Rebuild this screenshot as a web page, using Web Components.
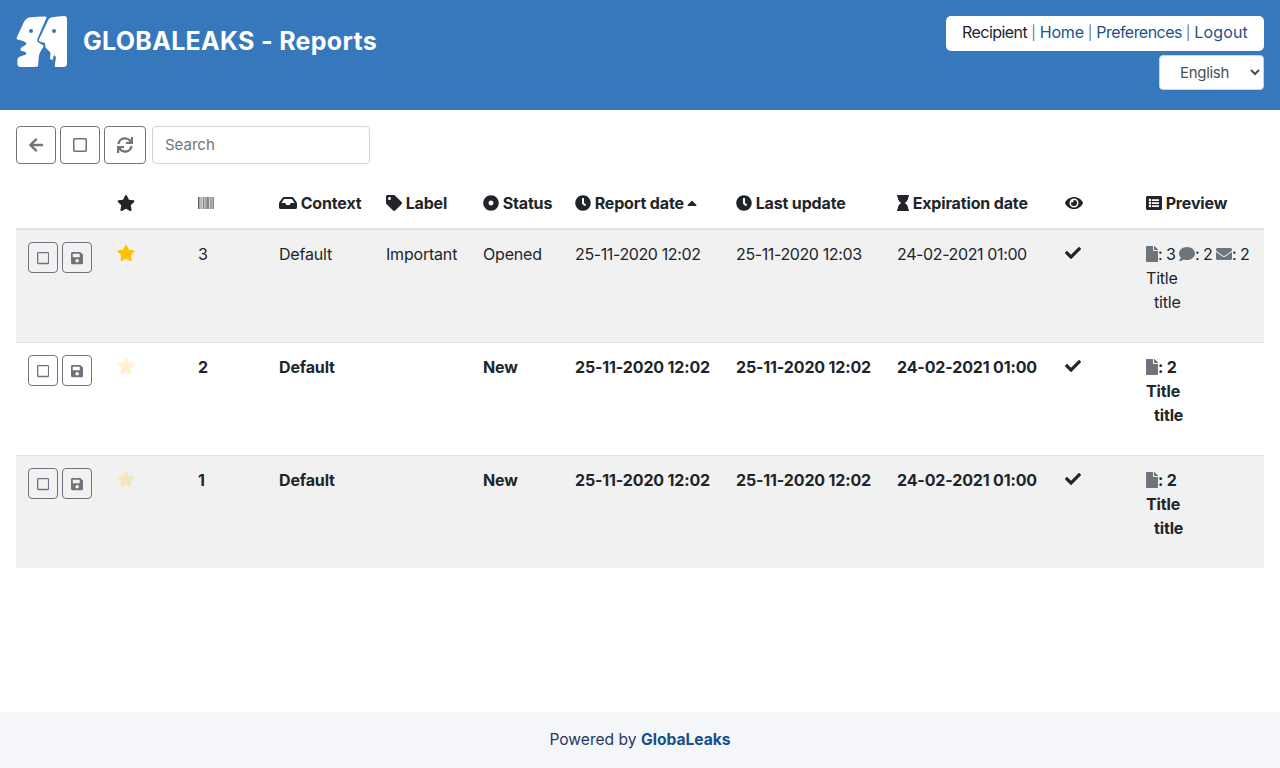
<!DOCTYPE html>
<html lang="en"><head><meta charset="utf-8"><title>GlobaLeaks - Reports</title>
<style>
html,body{margin:0;padding:0;background:#fff}
body{font:400 16px/24px Inter,"Liberation Sans",sans-serif;color:#212529}
</style></head><body>
<gl-app>
  <gl-header slot="header" title-text="GLOBALEAKS - Reports"></gl-header>
  <gl-toolbar>
    <gl-button size="lg" w="40"><gl-icon name="arrow"></gl-icon></gl-button>
    <gl-button size="lg" w="40"><gl-icon name="square"></gl-icon></gl-button>
    <gl-button size="lg" w="42"><gl-icon name="sync"></gl-icon></gl-button>
    <gl-search></gl-search>
  </gl-toolbar>
  <gl-table>
    <gl-row head>
      <gl-cell></gl-cell>
      <gl-cell><gl-icon name="star"></gl-icon></gl-cell>
      <gl-cell><gl-icon name="barcode"></gl-icon></gl-cell>
      <gl-cell><gl-icon name="inbox"></gl-icon> Context</gl-cell>
      <gl-cell><gl-icon name="tag"></gl-icon> Label</gl-cell>
      <gl-cell><gl-icon name="dot"></gl-icon> Status</gl-cell>
      <gl-cell><gl-icon name="clock"></gl-icon> Report date <gl-icon name="sort"></gl-icon></gl-cell>
      <gl-cell><gl-icon name="clock"></gl-icon> Last update</gl-cell>
      <gl-cell><gl-icon name="hourglass"></gl-icon> Expiration date</gl-cell>
      <gl-cell><gl-icon name="eye"></gl-icon></gl-cell>
      <gl-cell><gl-icon name="list"></gl-icon> Preview</gl-cell>
    </gl-row>
    <gl-row striped first>
      <gl-cell><gl-actions></gl-actions></gl-cell>
      <gl-cell up><gl-icon name="star" style="color:#ffc107"></gl-icon></gl-cell>
      <gl-cell>3</gl-cell><gl-cell>Default</gl-cell><gl-cell>Important</gl-cell><gl-cell>Opened</gl-cell>
      <gl-cell date>25-11-2020 12:02</gl-cell><gl-cell date>25-11-2020 12:03</gl-cell><gl-cell date>24-02-2021 01:00</gl-cell>
      <gl-cell up><gl-icon name="check"></gl-icon></gl-cell>
      <gl-cell tight><gl-icon name="file" style="color:#6c757d"></gl-icon>: 3 <gl-icon name="comment" style="color:#6c757d"></gl-icon>: 2 <gl-icon name="envelope" style="color:#6c757d"></gl-icon>: 2<br>Title<br><span style="padding-left:8px">title</span></gl-cell>
    </gl-row>
    <gl-row unread>
      <gl-cell><gl-actions></gl-actions></gl-cell>
      <gl-cell up><gl-icon name="star" style="color:#ffc107;opacity:.2"></gl-icon></gl-cell>
      <gl-cell>2</gl-cell><gl-cell>Default</gl-cell><gl-cell></gl-cell><gl-cell>New</gl-cell>
      <gl-cell>25-11-2020 12:02</gl-cell><gl-cell>25-11-2020 12:02</gl-cell><gl-cell>24-02-2021 01:00</gl-cell>
      <gl-cell up><gl-icon name="check"></gl-icon></gl-cell>
      <gl-cell><gl-icon name="file" style="color:#6c757d"></gl-icon>: 2<br>Title<br><span style="padding-left:8px">title</span></gl-cell>
    </gl-row>
    <gl-row striped unread>
      <gl-cell><gl-actions></gl-actions></gl-cell>
      <gl-cell up><gl-icon name="star" style="color:#ffc107;opacity:.2"></gl-icon></gl-cell>
      <gl-cell>1</gl-cell><gl-cell>Default</gl-cell><gl-cell></gl-cell><gl-cell>New</gl-cell>
      <gl-cell>25-11-2020 12:02</gl-cell><gl-cell>25-11-2020 12:02</gl-cell><gl-cell>24-02-2021 01:00</gl-cell>
      <gl-cell up><gl-icon name="check"></gl-icon></gl-cell>
      <gl-cell><gl-icon name="file" style="color:#6c757d"></gl-icon>: 2<br>Title<br><span style="padding-left:8px">title</span></gl-cell>
    </gl-row>
  </gl-table>
  <gl-footer></gl-footer>
</gl-app>
<script>
const ICONS={
star:[576,'M259.3 17.8L194 150.2 47.9 171.5c-26.2 3.8-36.7 36.1-17.7 54.6l105.7 103-25 145.5c-4.5 26.3 23.2 46 46.4 33.7L288 439.6l130.7 68.7c23.2 12.2 50.9-7.4 46.4-33.7l-25-145.5 105.7-103c19-18.5 8.5-50.8-17.7-54.6L382 150.2 316.7 17.8c-11.7-23.6-45.6-23.9-57.4 0z'],
arrow:[448,'M257.5 445.1l-22.2 22.2c-9.4 9.4-24.6 9.4-33.9 0L7 273c-9.4-9.4-9.4-24.6 0-33.9L201.4 44.7c9.4-9.4 24.6-9.4 33.9 0l22.2 22.2c9.5 9.5 9.3 25-.4 34.3L136.6 216H424c13.3 0 24 10.7 24 24v32c0 13.3-10.7 24-24 24H136.6l120.5 114.8c9.8 9.3 10 24.8.4 34.3z'],
square:[448,'M400 32H48C21.5 32 0 53.5 0 80v352c0 26.5 21.5 48 48 48h352c26.5 0 48-21.5 48-48V80c0-26.5-21.5-48-48-48zm-6 400H54c-3.3 0-6-2.7-6-6V86c0-3.3 2.7-6 6-6h340c3.3 0 6 2.7 6 6v340c0 3.3-2.7 6-6 6z'],
sync:[512,'M440.65 12.57l4 82.77A247.16 247.16 0 0 0 255.83 8C134.73 8 33.91 94.92 12.29 209.82A12 12 0 0 0 24.09 224h49.05a12 12 0 0 0 11.67-9.26 175.91 175.91 0 0 1 317-56.94l-101.46-4.86a12 12 0 0 0-12.57 12v47.41a12 12 0 0 0 12 12H500a12 12 0 0 0 12-12V12a12 12 0 0 0-12-12h-47.37a12 12 0 0 0-11.98 12.57zM255.83 432a175.61 175.61 0 0 1-146-77.8l101.8 4.87a12 12 0 0 0 12.57-12v-47.4a12 12 0 0 0-12-12H12a12 12 0 0 0-12 12V500a12 12 0 0 0 12 12h47.35a12 12 0 0 0 12-12.6l-4.15-82.57A247.17 247.17 0 0 0 255.83 504c121.11 0 221.93-86.92 243.55-201.82a12 12 0 0 0-11.8-14.18h-49.05a12 12 0 0 0-11.67 9.26A175.86 175.86 0 0 1 255.83 432z'],
save:[448,'M433.941 129.941l-83.882-83.882A48 48 0 0 0 316.118 32H48C21.49 32 0 53.49 0 80v352c0 26.51 21.49 48 48 48h352c26.51 0 48-21.49 48-48V163.882a48 48 0 0 0-14.059-33.941zM224 416c-35.346 0-64-28.654-64-64 0-35.346 28.654-64 64-64s64 28.654 64 64c0 35.346-28.654 64-64 64zm96-304.52V212c0 6.627-5.373 12-12 12H76c-6.627 0-12-5.373-12-12V108c0-6.627 5.373-12 12-12h228.52c3.183 0 6.235 1.264 8.485 3.515l3.48 3.48A11.996 11.996 0 0 1 320 111.48z'],
barcode:[512,'M0 64h18v384H0zM27 64h9v384h-9zM54 64h9v384h-9zM81 64h9v384h-9zM117 64h18v384h-18zM162 64h18v384h-18zM198 64h9v384h-9zM225 64h9v384h-9zM252 64h18v384h-18zM297 64h18v384h-18zM333 64h18v384h-18zM378 64h9v384h-9zM405 64h18v384h-18zM441 64h9v384h-9zM468 64h9v384h-9zM494 64h18v384h-18z'],
inbox:[576,'M567.938 243.908L462.25 85.374A48.003 48.003 0 0 0 422.311 64H153.689a48 48 0 0 0-39.938 21.374L8.062 243.908A47.994 47.994 0 0 0 0 270.533V400c0 26.51 21.49 48 48 48h480c26.51 0 48-21.49 48-48V270.533a47.994 47.994 0 0 0-8.062-26.625zM162.252 128h251.497l85.333 128H376l-32 64H232l-32-64H76.918l85.334-128z'],
tag:[512,'M0 252.118V48C0 21.49 21.49 0 48 0h204.118a48 48 0 0 1 33.941 14.059l211.882 211.882c18.745 18.745 18.745 49.137 0 67.882L293.823 497.941c-18.745 18.745-49.137 18.745-67.882 0L14.059 286.059A48 48 0 0 1 0 252.118zM112 64c-26.51 0-48 21.49-48 48s21.49 48 48 48 48-21.49 48-48-21.49-48-48-48z'],
dot:[512,'M256 8C119.033 8 8 119.033 8 256s111.033 248 248 248 248-111.033 248-248S392.967 8 256 8zm80 248c0 44.112-35.888 80-80 80s-80-35.888-80-80 35.888-80 80-80 80 35.888 80 80z'],
clock:[512,'M256,8C119,8,8,119,8,256S119,504,256,504,504,393,504,256,393,8,256,8Zm92.49,313h0l-20,25a16,16,0,0,1-22.49,2.5h0l-67-49.72a40,40,0,0,1-15-31.23V112a16,16,0,0,1,16-16h32a16,16,0,0,1,16,16V256l58,42.5A16,16,0,0,1,348.49,321Z'],
hourglass:[384,'M360 64c13.255 0 24-10.745 24-24V24c0-13.255-10.745-24-24-24H24C10.745 0 0 10.745 0 24v16c0 13.255 10.745 24 24 24 0 90.965 51.016 167.734 120.842 192C75.016 280.266 24 357.035 24 448c-13.255 0-24 10.745-24 24v16c0 13.255 10.745 24 24 24h336c13.255 0 24-10.745 24-24v-16c0-13.255-10.745-24-24-24 0-90.965-51.016-167.734-120.842-192C308.984 231.734 360 154.965 360 64z'],
eye:[576,'M572.52 241.4C518.29 135.59 410.93 64 288 64S57.68 135.64 3.48 241.41a32.35 32.35 0 0 0 0 29.19C57.71 376.41 165.07 448 288 448s230.32-71.64 284.52-177.41a32.35 32.35 0 0 0 0-29.19zM288 400a144 144 0 1 1 144-144 143.93 143.93 0 0 1-144 144zm0-240a95.31 95.31 0 0 0-25.31 3.79 47.85 47.85 0 0 1-66.9 66.9A95.78 95.78 0 1 0 288 160z'],
list:[512,'M464 480H48c-26.51 0-48-21.49-48-48V80c0-26.51 21.49-48 48-48h416c26.51 0 48 21.49 48 48v352c0 26.51-21.49 48-48 48zM128 120c-22.091 0-40 17.909-40 40s17.909 40 40 40 40-17.909 40-40-17.909-40-40-40zm0 96c-22.091 0-40 17.909-40 40s17.909 40 40 40 40-17.909 40-40-17.909-40-40-40zm0 96c-22.091 0-40 17.909-40 40s17.909 40 40 40 40-17.909 40-40-17.909-40-40-40zm288-136v-32c0-6.627-5.373-12-12-12H204c-6.627 0-12 5.373-12 12v32c0 6.627 5.373 12 12 12h200c6.627 0 12-5.373 12-12zm0 96v-32c0-6.627-5.373-12-12-12H204c-6.627 0-12 5.373-12 12v32c0 6.627 5.373 12 12 12h200c6.627 0 12-5.373 12-12zm0 96v-32c0-6.627-5.373-12-12-12H204c-6.627 0-12 5.373-12 12v32c0 6.627 5.373 12 12 12h200c6.627 0 12-5.373 12-12z'],
check:[512,'M173.898 439.404l-166.4-166.4c-9.997-9.997-9.997-26.206 0-36.204l36.203-36.204c9.997-9.998 26.207-9.998 36.204 0L192 312.69 432.095 72.596c9.997-9.997 26.207-9.997 36.204 0l36.203 36.204c9.997 9.997 9.997 26.206 0 36.204l-294.4 294.401c-9.998 9.997-26.207 9.997-36.204-.001z'],
file:[384,'M224 136V0H24C10.7 0 0 10.7 0 24v464c0 13.3 10.7 24 24 24h336c13.3 0 24-10.7 24-24V160H248c-13.2 0-24-10.8-24-24zm160-14.1v6.1H256V0h6.1c6.4 0 12.5 2.5 17 7l97.9 98c4.5 4.5 7 10.6 7 16.9z'],
comment:[512,'M256 32C114.6 32 0 125.1 0 240c0 49.6 21.4 95 57 130.7C44.5 421.1 2.7 466 2.2 466.5c-2.2 2.3-2.8 5.7-1.5 8.7S4.8 480 8 480c66.3 0 116-31.8 140.6-51.4 32.7 12.3 69 19.4 107.4 19.4 141.4 0 256-93.1 256-208S397.4 32 256 32z'],
envelope:[512,'M502.3 190.8c3.9-3.1 9.7-.2 9.7 4.7V400c0 26.5-21.5 48-48 48H48c-26.5 0-48-21.5-48-48V195.6c0-5 5.7-7.8 9.7-4.7 22.4 17.4 52.1 39.5 154.1 113.6 21.1 15.4 56.7 47.8 92.2 47.6 35.7.3 72-32.8 92.3-47.6 102-74.1 131.6-96.3 154-113.7zM256 320c23.2.4 56.6-29.2 73.4-41.4 132.7-96.3 142.8-104.7 173.4-128.7 5.8-4.5 9.2-11.5 9.2-18.9v-19c0-26.5-21.5-48-48-48H48C21.5 64 0 85.5 0 112v19c0 7.4 3.4 14.3 9.2 18.9 30.6 23.9 40.7 32.4 173.4 128.7 16.8 12.2 50.2 41.8 73.4 41.4z'],
sort:[320,'M279 349H41c-21.4 0-32.1-25.9-17-41L143 189c9.4-9.4 24.6-9.4 33.9 0l119 119c15.2 15.1 4.5 41-16.9 41z']
};
function el(name,html,init){
  customElements.define(name,class extends HTMLElement{
    connectedCallback(){
      if(this.shadowRoot)return;
      const r=this.attachShadow({mode:'open'});
      r.innerHTML=typeof html==='function'?html(this):html;
      if(init)init(this,r);
    }
  });
}
el('gl-icon',h=>{
  const [w,d]=ICONS[h.getAttribute('name')];
  return `<style>:host{display:inline-block;line-height:0;height:1em;width:${w/512}em;vertical-align:-.125em}svg{display:block;width:100%;height:100%;fill:currentColor}</style><svg viewBox="0 0 ${w} 512" aria-hidden="true"><path d="${d}"/></svg>`;
});
el('gl-logo',`<style>:host{display:block;width:51px;height:51px;flex:none}svg{display:block}</style>
<svg width="51" height="51" viewBox="16 16 51 51" aria-hidden="true">
<path fill="#fff" fill-rule="evenodd" d="M29 17.500Q37 16.500 45.500 16.500Q47 16.500 46.300 18L37.600 38.500Q36.600 41 38 42.300L43.500 45.500Q43.800 47 42 49Q38.500 54 38.500 60L38 66.500L33 67H21Q17.500 67 17.300 63.500L17.500 59Q17.500 57.500 20 56.500L26 54.500Q26.500 53 25.500 52L20.500 50.500Q20 48 23 46.500Q26.500 45 26.500 43.500Q26 42 23 41L17.500 39.500Q16 39 16.800 37.500L23 24Q25 18.500 29 17.500ZM31 29A1.900 1.900 0 1 0 31 33A1.900 1.900 0 1 0 31 29Z"/>
<path fill="#fff" fill-rule="evenodd" d="M51 17.500Q58 16 64 16Q67 16 67 19V63Q67 67 63.500 67H55.500Q54.500 67 55 64L56 57L54 55L52.500 60L50 59L50.500 52.500L45.500 47.500L45 43L39.500 41.500Q38.500 41 39 39.500L48.500 19.500Q49.500 18 51 17.500ZM54 29A1.900 1.900 0 1 0 54 33A1.900 1.900 0 1 0 54 29Z"/>
</svg>`);
el('gl-header',h=>`<style>
:host{display:flex;justify-content:space-between;align-items:flex-start;height:110px;box-sizing:border-box;padding:16px;background:#3778bd}
.brand{display:flex;gap:16px;align-items:center}
h1{margin:0 0 1px;font:700 25px/29px Inter,sans-serif;color:#fff;letter-spacing:.3px;white-space:nowrap}
.right{display:flex;flex-direction:column;align-items:flex-end;gap:4px}
.nav{background:#fff;border-radius:5px;height:35px;line-height:33px;padding:0 16px;box-sizing:border-box;white-space:nowrap;color:#6c757d;font-size:16px}
.nav b{font-weight:400;color:#212529;letter-spacing:-.55px}
.nav a{color:#1f5288;text-decoration:none}
.sep{font-size:14px}
select{height:35px;width:105px;box-sizing:border-box;border:1px solid #ced4da;border-radius:4px;background:#fff;color:#495057;font:400 15px Inter,sans-serif;letter-spacing:-.3px;padding:0 0 0 16px}
</style>
<div class="brand"><gl-logo></gl-logo><h1>${h.getAttribute('title-text')}</h1></div>
<div class="right"><div class="nav"><b>Recipient</b><span class="sep"> | </span><a href="#" style="letter-spacing:-.2px">Home</a><span class="sep"> | </span><a href="#" style="letter-spacing:-.55px">Preferences</a><span class="sep"> | </span><a href="#" style="letter-spacing:.15px">Logout</a></div>
<select aria-label="Language"><option>English</option></select></div>`);
el('gl-button',h=>`<style>
:host{display:inline-flex;align-items:center;justify-content:center;box-sizing:border-box;border:1px solid #6c757d;border-radius:4px;color:#6c757d;background:transparent;
width:${h.getAttribute('w')||30}px;height:${h.getAttribute('size')==='lg'?38:31}px;font-size:${h.getAttribute('size')==='lg'?16:14}px;flex:none}
</style><slot></slot>`);
el('gl-toolbar',`<style>:host{display:flex;gap:4px;padding:16px 16px 15px}</style><slot></slot>`);
el('gl-search',`<style>:host{display:block;margin-left:2px}
input{display:block;width:218px;height:38px;box-sizing:border-box;border:1px solid #ced4da;border-radius:4px;padding:0 12px 2px;font:400 15px Inter,sans-serif;color:#495057;background:#fff}
input::placeholder{color:#6c757d;opacity:1}</style><input type="text" placeholder="Search">`);
el('gl-table',`<style>:host{display:block;margin:0 16px}</style><slot></slot>`);
el('gl-row',`<style>
:host{display:grid;grid-template-columns:89px 81px 81px 107px 97px 92px 161px 161px 168px 81px 130px;height:113px;box-sizing:border-box;border-top:1px solid #dee2e6}
:host([first]){height:112px;border-top:0}
:host([striped]){background:#f1f1f1}
:host([unread]),:host([head]){font-weight:700;--ls:-.15px}
:host([head]){height:51px;border-top:0;border-bottom:2px solid #dee2e6;background:transparent}
</style><slot></slot>`);
el('gl-cell',`<style>:host{display:block;padding:12px;min-width:0;white-space:nowrap;letter-spacing:var(--ls,-.2px);box-sizing:border-box}
:host([date]){letter-spacing:-.38px}
:host([tight]){word-spacing:-.8px}
:host([up]){line-height:22px}</style><slot></slot>`);
el('gl-actions',`<style>:host{display:flex;gap:4px}</style>
<gl-button><gl-icon name="square"></gl-icon></gl-button><gl-button><gl-icon name="save"></gl-icon></gl-button>`);
el('gl-footer',`<style>:host{display:block;height:56px;line-height:56px;background:#f5f6fa;text-align:center;color:#1f3a5a;font-size:15.6px;margin-top:auto}
a{color:#17508a;font-weight:700;text-decoration:none}</style>Powered by <a href="#">GlobaLeaks</a>`);
el('gl-app',`<style>:host{display:flex;flex-direction:column;height:768px;overflow:hidden}</style><slot name="header"></slot><slot></slot>`);
</script>
</body></html>
